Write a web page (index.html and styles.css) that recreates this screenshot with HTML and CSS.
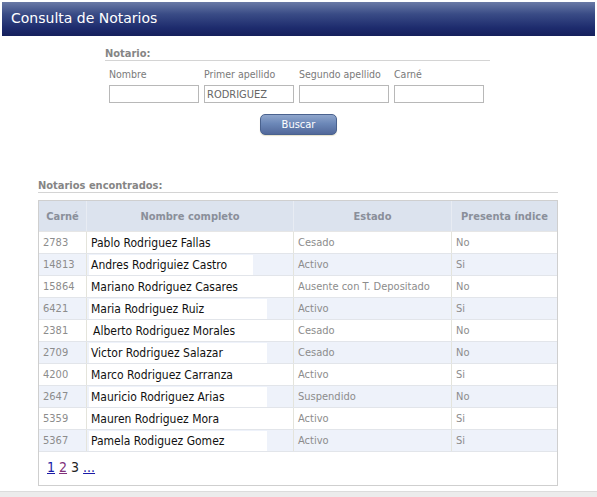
FILE: index.html
```html
<!DOCTYPE html>
<html lang="es">
<head>
<meta charset="utf-8">
<title>Consulta de Notarios</title>
<link rel="stylesheet" href="styles.css">
</head>
<body>
<div class="titlebar">Consulta de Notarios</div>

<section class="search">
  <h2 class="section-title">Notario:</h2>
  <div class="fields">
    <label class="field"><span class="label">Nombre</span><input class="input" type="text" value=""></label>
    <label class="field"><span class="label">Primer apellido</span><input class="input" type="text" value="RODRIGUEZ"></label>
    <label class="field"><span class="label">Segundo apellido</span><input class="input" type="text" value=""></label>
    <label class="field"><span class="label">Carné</span><input class="input" type="text" value=""></label>
  </div>
  <div class="actions"><button class="btn" type="button">Buscar</button></div>
</section>

<section class="results">
  <h2 class="section-title">Notarios encontrados:</h2>
  <div class="grid-box">
    <table class="grid">
      <thead>
        <tr><th class="c-carne">Carné</th><th class="c-nombre">Nombre completo</th><th class="c-estado">Estado</th><th class="c-indice">Presenta índice</th></tr>
      </thead>
      <tbody>
        <tr><td>2783</td><td><span class="name" style="width:178px">Pablo Rodriguez Fallas</span></td><td>Cesado</td><td>No</td></tr>
        <tr class="alt"><td>14813</td><td><span class="name" style="width:164px">Andres Rodriguiez Castro</span></td><td>Activo</td><td>Si</td></tr>
        <tr><td>15864</td><td><span class="name" style="width:178px">Mariano Rodriguez Casares</span></td><td>Ausente con T. Depositado</td><td>No</td></tr>
        <tr class="alt"><td>6421</td><td><span class="name" style="width:178px">Maria Rodriguez Ruiz</span></td><td>Activo</td><td>Si</td></tr>
        <tr><td>2381</td><td><span class="name pad" style="width:150px">Alberto Rodriguez Morales</span></td><td>Cesado</td><td>No</td></tr>
        <tr class="alt"><td>2709</td><td><span class="name" style="width:178px">Victor Rodriguez Salazar</span></td><td>Cesado</td><td>No</td></tr>
        <tr><td>4200</td><td><span class="name" style="width:178px">Marco Rodriguez Carranza</span></td><td>Activo</td><td>Si</td></tr>
        <tr class="alt"><td>2647</td><td><span class="name" style="width:178px">Mauricio Rodriguez Arias</span></td><td>Suspendido</td><td>No</td></tr>
        <tr><td>5359</td><td><span class="name" style="width:178px">Mauren Rodriguez Mora</span></td><td>Activo</td><td>Si</td></tr>
        <tr class="alt"><td>5367</td><td><span class="name" style="width:178px">Pamela Rodiguez Gomez</span></td><td>Activo</td><td>Si</td></tr>
      </tbody>
    </table>
    <div class="pager"><a class="page" href="#">1</a> <a class="page visited" href="#">2</a> <span class="current">3</span> <a class="page" href="#">...</a></div>
  </div>
</section>

<div class="footer-bar"></div>
</body>
</html>
```

FILE: styles.css
```css
html, body {
  margin: 0;
  padding: 0;
  background: #fff;
}
body {
  font-family: "DejaVu Sans Condensed", "DejaVu Sans", Verdana, sans-serif;
  font-stretch: condensed;
  font-size: 11px;
  color: #777;
  width: 597px;
  height: 497px;
  overflow: hidden;
  position: relative;
}
.titlebar {
  margin: 2px 2px 0 2px;
  height: 34px;
  line-height: 33px;
  padding-left: 9px;
  color: #fff;
  font-family: "DejaVu Sans", Verdana, sans-serif;
  font-stretch: normal;
  font-size: 14px;
  background: linear-gradient(#6a7aa6 0%, #3a4c86 35%, #1e2c6e 75%, #15205c 100%);
}
.section-title {
  margin: 0;
  font-size: 11px;
  font-weight: bold;
  color: #858585;
  padding-bottom: 0;
  border-bottom: 1px solid #d4d4d4;
  line-height: 13px;
}
.search {
  margin: 11px 0 0 105px;
  width: 385px;
}
.fields {
  display: flex;
  gap: 5px;
  margin-top: 7px;
  padding-left: 4px;
}
.field {
  display: flex;
  flex-direction: column;
  width: 90px;
  white-space: nowrap;
}
.label {
  color: #7a7a7a;
  font-size: 10.5px;
  height: 12px;
  line-height: 12px;
  margin-bottom: 5px;
}
.input {
  box-sizing: border-box;
  width: 90px;
  height: 18px;
  border: 1px solid #b8b8b8;
  padding: 0 2px;
  font-family: inherit;
  font-stretch: condensed;
  font-size: 11px;
  color: #666;
  background: #fff;
  outline: none;
}
.actions {
  display: flex;
  justify-content: center;
  margin-top: 11px;
  padding-left: 2px;
}
.btn {
  width: 77px;
  height: 21px;
  border: 1px solid #4a628e;
  border-radius: 5px;
  background: linear-gradient(#8fa6cc 0%, #6c88b8 45%, #52689a 100%);
  color: #fff;
  font-family: inherit;
  font-stretch: condensed;
  font-size: 11px;
  padding: 0;
  box-shadow: 0 1px 1px #e6e2cc;
}
.results {
  margin: 44px 0 0 38px;
  width: 520px;
}
.grid-box {
  margin-top: 7px;
  border: 1px solid #cfcfcf;
  height: 286px;
  box-sizing: border-box;
}
.grid {
  border-collapse: collapse;
  width: 100%;
  table-layout: fixed;
}
.grid th {
  background: #dce3ee;
  color: #8a8f9a;
  font-weight: bold;
  height: 30px;
  padding: 0;
  border-right: 1px solid #e8ecf3;
  border-bottom: 1px solid #e6e6e6;
}
.grid th:last-child, .grid td:last-child { border-right: none; }
.c-carne { width: 47px; }
.c-nombre { width: 206px; }
.c-estado { width: 157px; }
.grid td {
  height: 21px;
  padding: 0 0 0 4px;
  border-right: 1px solid #e4e4dc;
  border-bottom: 1px solid #e2e5ea;
  color: #8c8c8c;
  white-space: nowrap;
  overflow: hidden;
}
.grid td:nth-child(2) { padding-left: 2px; }
.grid tr.alt td { background: #eef2fa; }
.name {
  display: inline-block;
  box-sizing: border-box;
  background: #fff;
  color: #111;
  font-size: 12px;
  height: 20px;
  line-height: 20px;
  padding-left: 2px;
  vertical-align: middle;
}
.name.pad { padding-left: 4px; }
.pager {
  padding: 7px 0 0 8px;
  font-size: 14px;
  color: #222;
}
.page { color: #1a1aa6; }
.page.visited { color: #80307a; }
.current { color: #222; }
.footer-bar {
  position: absolute;
  left: 0;
  right: 0;
  bottom: 0;
  height: 5px;
  background: #ececec;
  border-top: 1px solid #dcdcdc;
}
```
